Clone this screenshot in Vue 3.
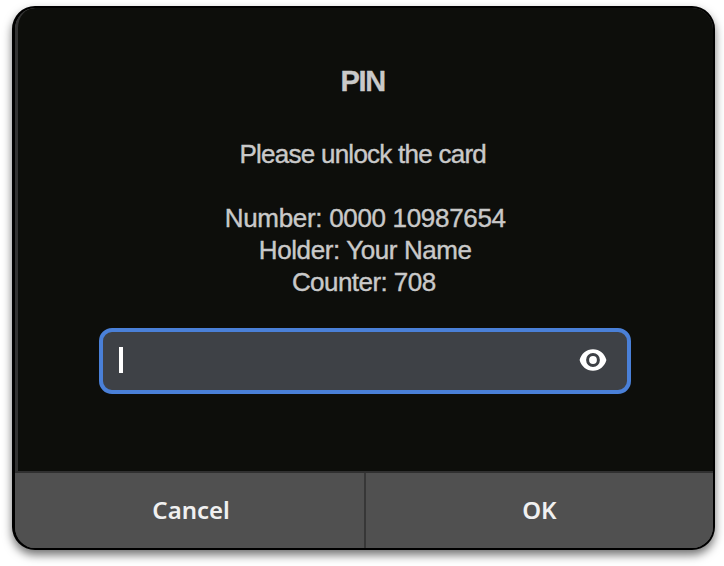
<script setup>
const details = [
  { id: 'number', text: 'Number: 0000 10987654' },
  { id: 'holder', text: 'Holder: Your Name' },
  { id: 'counter', text: 'Counter: 708' },
]
</script>

<template>
  <main class="stage">
    <section class="dialog" role="dialog">
      <div class="content">
        <h1 class="title">PIN</h1>
        <p class="line prompt">Please unlock the card</p>
        <p v-for="d in details" :key="d.id" class="line" :class="d.id">{{ d.text }}</p>
        <div class="field">
          <span class="caret"></span>
          <svg class="eye" width="28" height="22" viewBox="0 0 28 22">
            <path fill="#fff" fill-rule="evenodd" d="M14 0.3C7.4 0.3 2.2 4.8 0.6 11C2.2 17.2 7.4 21.7 14 21.7S25.8 17.2 27.4 11C25.8 4.8 20.6 0.3 14 0.3ZM14 4.1A6.9 6.9 0 1 1 14 17.9A6.9 6.9 0 1 1 14 4.1Z" />
            <circle cx="14" cy="11" r="3.9" fill="#fff" />
          </svg>
        </div>
      </div>
      <div class="actions">
        <button class="action cancel">Cancel</button>
        <button class="action">OK</button>
      </div>
    </section>
  </main>
</template>

<style>
body {
  margin: 0;
  background: #fff;
}
</style>

<style scoped>
.stage {
  box-sizing: border-box;
  width: 724px;
  height: 566px;
  padding: 6px 9px 16px 12px;
  overflow: hidden;
  background: #fff;
}
.dialog {
  box-sizing: border-box;
  display: flex;
  flex-direction: column;
  width: 702.5px;
  height: 544px;
  border: 2px solid #000;
  border-left-width: 3px;
  border-radius: 23px;
  overflow: hidden;
  background: #505050;
  box-shadow: 0 5px 10px rgba(0, 0, 0, 0.55);
}
.content {
  box-sizing: border-box;
  display: flex;
  flex-direction: column;
  align-items: center;
  height: 465px;
  padding: 54px 0 0;
  border-left: 3px solid #333;
  border-bottom: 2px solid #303030;
  border-top-left-radius: 20px;
  background: #0d0e0b;
  color: #c9c9c9;
  font-family: "Liberation Sans", Arial, sans-serif;
}
.title {
  margin: 0 0 38px;
  padding-right: 5px;
  font-size: 29px;
  line-height: 38px;
  letter-spacing: -1.2px;
  -webkit-text-stroke: 0.3px #c9c9c9;
}
.line {
  margin: 0;
  font-size: 26px;
  line-height: 32px;
  letter-spacing: -0.4px;
  white-space: pre;
  -webkit-text-stroke: 0.4px #c9c9c9;
}
.prompt {
  margin-bottom: 32px;
  padding-right: 5px;
  letter-spacing: -0.75px;
}
.number {
  letter-spacing: -0.32px;
}
.counter {
  padding-right: 3px;
  letter-spacing: -0.55px;
}
.field {
  box-sizing: border-box;
  display: flex;
  align-items: center;
  justify-content: space-between;
  width: 532px;
  height: 66px;
  margin-top: 30px;
  padding: 0 20px 2px 16px;
  border: 4px solid #4a80d8;
  border-radius: 13px;
  background: #3e4146;
}
.caret {
  width: 4px;
  height: 26px;
  background: #fff;
}
.actions {
  display: flex;
  flex: 1;
}
.action {
  flex: 1;
  margin: 0;
  padding: 0 0 2px;
  border: 0;
  background: #505050;
  color: #f0f0f0;
  font-family: "Noto Sans", sans-serif;
  font-size: 24px;
  font-weight: 600;
}
.cancel {
  padding-left: 3px;
}
.action + .action {
  border-left: 2px solid #373737;
}
</style>
